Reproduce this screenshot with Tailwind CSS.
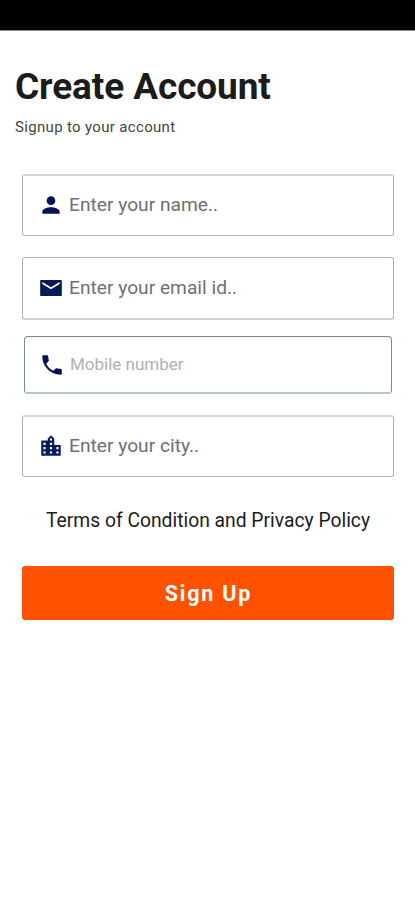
<!DOCTYPE html>
<html lang="en">
<head>
<meta charset="utf-8">
<title>Create Account</title>
<script src="https://cdn.jsdelivr.net/npm/@tailwindcss/browser@4"></script>
</head>
<body class="bg-white font-[Roboto,sans-serif] text-[#1c1c1c]">
<div class="flex h-[900px] w-[415px] flex-col overflow-hidden">
  <header class="h-[31px] shrink-0 border-b border-[#888] bg-black"></header>
  <main class="flex flex-col">
    <h1 class="mt-[34px] ml-[15px] h-11 text-[37px] leading-[44px] font-bold tracking-[-0.1px] whitespace-nowrap"><span>Create Account</span></h1>
    <p class="mt-[8px] ml-[15px] h-5 text-[15px] leading-5 tracking-[0.33px] whitespace-nowrap text-[#444]"><span>Signup to your account</span></p>
    <form class="mt-[37px] ml-[22px] flex w-[372px] flex-col">
      <label class="flex h-[62px] items-center rounded-[3px] border border-t-2 border-[#b4b4b4] border-t-[#d4d4d4] pl-[15px]">
        <svg class="mb-0.5 size-[26px] fill-[#061255]" viewBox="0 0 24 24"><path d="M12 12c2.21 0 4-1.79 4-4s-1.79-4-4-4-4 1.79-4 4 1.79 4 4 4zm0 2c-2.67 0-8 1.34-8 4v2h16v-2c0-2.66-5.33-4-8-4z"/></svg>
        <span class="ml-[5px] text-[19.2px] whitespace-nowrap text-[#707070]">Enter your name..</span>
      </label>
      <label class="mt-[21px] flex h-[63px] items-center rounded-[3px] border border-b-2 border-[#b4b4b4] border-b-[#d0d0d0] pl-[15px]">
        <svg class="h-[24px] w-[26px] fill-[#061b55]" viewBox="0 0 24 24" preserveAspectRatio="none"><path d="M21 4H3c-.6 0-1 .4-1 1v14c0 .6.4 1 1 1h18c.6 0 1-.4 1-1V5c0-.6-.4-1-1-1zm-1 4l-8 5.2L4 8V6l8 5.2L20 6v2z"/></svg>
        <span class="ml-[5px] pt-px text-[19.2px] whitespace-nowrap text-[#707070]">Enter your email id..</span>
      </label>
      <label class="mx-0.5 mt-4 flex h-[58px] items-center rounded-[4px] border border-b-2 border-[#768b92] border-b-[#b5c8c8] pl-[14px]">
        <svg class="size-[26px] fill-[#061255]" viewBox="0 0 24 24"><path d="M6.62 10.79c1.44 2.83 3.76 5.14 6.59 6.59l2.2-2.2c.27-.27.67-.36 1.02-.24 1.12.37 2.33.57 3.57.57.55 0 1 .45 1 1V20c0 .55-.45 1-1 1-9.39 0-17-7.61-17-17 0-.55.45-1 1-1h3.5c.55 0 1 .45 1 1 0 1.25.2 2.45.57 3.57.11.35.03.74-.25 1.02l-2.2 2.2z"/></svg>
        <span class="ml-[5px] text-[17px] whitespace-nowrap text-[#b0b0b0]">Mobile number</span>
      </label>
      <label class="mt-[21px] flex h-[62px] items-center rounded-[3px] border border-t-2 border-[#b4b4b4] border-t-[#d4d4d4] pl-[15px]">
        <svg class="mb-0.5 size-[26px] fill-[#061b5c]" viewBox="0 0 24 24"><path d="M15 11V5l-3-3-3 3v2H3v14h18V11h-6zm-8 8H5v-2h2v2zm0-4H5v-2h2v2zm0-4H5V9h2v2zm6 8h-2v-2h2v2zm0-4h-2v-2h2v2zm0-4h-2V9h2v2zm0-4h-2V5h2v2zm6 12h-2v-2h2v2zm0-4h-2v-2h2v2z"/></svg>
        <span class="ml-[5px] text-[19.2px] whitespace-nowrap text-[#707070]">Enter your city..</span>
      </label>
      <p class="mt-[32px] h-6 text-center text-[19.3px] leading-6 whitespace-nowrap"><span>Terms of Condition and Privacy Policy</span></p>
      <button type="button" class="mt-[33px] h-[54px] rounded-[3px] bg-[#ff5200] pt-[3px] pl-px text-[21.5px] font-bold tracking-[1.8px] text-white"><span>Sign Up</span></button>
    </form>
  </main>
</div>
</body>
</html>
